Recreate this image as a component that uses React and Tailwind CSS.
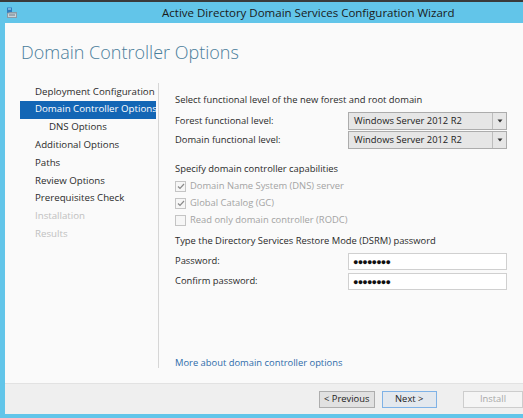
// ----- AD DS Configuration Wizard -----
// Domain Controller Options page

const navItems = [
  { label: "Deployment Configuration" },
  { label: "Domain Controller Options", active: true },
  { label: "DNS Options", indent: true },
  { label: "Additional Options" },
  { label: "Paths" },
  { label: "Review Options" },
  { label: "Prerequisites Check" },
  { label: "Installation", disabled: true },
  { label: "Results", disabled: true },
];

const WizardIcon = () => (
  <svg width="12" height="12" viewBox="0 0 12 12">
    <rect x="1" y="0.5" width="5" height="7" fill="#2f7fc1" />
    <rect x="2" y="1.5" width="3" height="1" fill="#bfe3f7" />
    <path d="M1 6 L4 5 L11 5 L11 11 L1 11 Z" fill="#8a9aa6" />
    <rect x="2" y="6.5" width="8" height="3.5" fill="#c9d3da" />
    <rect x="3" y="7.5" width="6" height="1" fill="#6b7c88" />
  </svg>
);

const Dropdown = ({ value }) => (
  <div className="flex h-[18px] w-[159px] border border-[#acacac] bg-[#e6e6e6]">
    <div className="flex flex-1 items-center pl-[5px] text-[9.4px] text-[#222]">{value}</div>
    <div className="flex w-[14px] items-center justify-center border-l border-[#bdbdbd]">
      <svg width="6" height="4" viewBox="0 0 6 4">
        <path d="M0.5 0.5 L5.5 0.5 L3 3.5 Z" fill="#333" />
      </svg>
    </div>
  </div>
);

const Check = ({ checked, label }) => (
  <div className="flex h-[17px] items-center gap-[4px]">
    <div className="flex h-[11px] w-[11px] items-center justify-center border border-[#c4c4c4] bg-[#f6f6f6]">
      {checked && (
        <svg width="8" height="7" viewBox="0 0 8 7">
          <path d="M1 3.5 L3 5.5 L7 1" fill="none" stroke="#8a8a8a" strokeWidth="1.2" />
        </svg>
      )}
    </div>
    <span className="text-[9.4px] text-[#a3a3a3]">{label}</span>
  </div>
);

const PasswordRow = ({ label }) => (
  <div className="flex items-center">
    <span className="w-[173px] text-[9.4px] text-[#2a2a2a]">{label}</span>
    <div className="flex h-[17px] w-[159px] items-center border border-[#d0d0d0] bg-white pl-[4px] text-[9px] tracking-[-0.8px] text-[#111]">
      ●●●●●●●●
    </div>
  </div>
);

export default function App() {
  return (
    <div
      className="flex h-[418px] w-[523px] flex-col overflow-hidden bg-[#3a3a3a]"
      style={{ fontFamily: '"Open Sans", "Noto Sans", sans-serif' }}
    >
      <div className="h-[2px]" />
      <div className="flex flex-1 flex-col bg-[#62c5e9] pb-[4px] pl-[5px]">
        {/* title bar */}
        <div className="flex h-[21px] items-center">
          <div className="ml-[1px] flex items-center">
            <WizardIcon />
          </div>
          <span className="ml-[144px] text-[11.5px] text-[#1a1a1a]">
            Active Directory Domain Services Configuration Wizard
          </span>
        </div>

        {/* body */}
        <div className="flex flex-1 flex-col bg-[#fafafa]">
          <div className="h-[60px] pl-[16px] pt-[16px]">
            <h1 className="text-[18px] font-light leading-[26px] text-[#4a7d9a]">Domain Controller Options</h1>
          </div>

          <div className="flex h-[300px]">
            <div className="ml-[15px] h-[285px] w-[139px] border-r border-[#d6d6d6] pr-[2px]">
              {navItems.map((item) => (
                <div
                  key={item.label}
                  className={
                    "flex h-[17.8px] items-center whitespace-nowrap text-[9.7px] " +
                    (item.indent ? "pl-[29px] " : "pl-[15px] ") +
                    (item.active
                      ? "bg-[#1366b5] text-white"
                      : item.disabled
                        ? "text-[#c0c0c0]"
                        : "text-[#2a2a2a]")
                  }
                >
                  {item.label}
                </div>
              ))}
            </div>

            <div className="flex flex-1 flex-col pl-[16px] pt-[10px]">
              <div className="text-[9.4px] leading-[14px] text-[#2a2a2a]">
                Select functional level of the new forest and root domain
              </div>
              <div className="mt-[5px] flex flex-col gap-[1px]">
                <div className="flex items-center">
                  <span className="w-[173px] text-[9.4px] text-[#2a2a2a]">Forest functional level:</span>
                  <Dropdown value="Windows Server 2012 R2" />
                </div>
                <div className="flex items-center">
                  <span className="w-[173px] text-[9.4px] text-[#2a2a2a]">Domain functional level:</span>
                  <Dropdown value="Windows Server 2012 R2" />
                </div>
              </div>

              <div className="mt-[13px] text-[9.4px] leading-[14px] text-[#2a2a2a]">
                Specify domain controller capabilities
              </div>
              <div className="mt-[2px] flex flex-col">
                <Check checked label="Domain Name System (DNS) server" />
                <Check checked label="Global Catalog (GC)" />
                <Check label="Read only domain controller (RODC)" />
              </div>

              <div className="mt-[5px] text-[9.4px] leading-[14px] text-[#2a2a2a]">
                Type the Directory Services Restore Mode (DSRM) password
              </div>
              <div className="mt-[5px] flex flex-col gap-[3px]">
                <PasswordRow label="Password:" />
                <PasswordRow label="Confirm password:" />
              </div>

              <div className="mt-auto pb-[13px] text-[9.4px] text-[#2f6caa]">
                More about domain controller options
              </div>
            </div>
          </div>

          {/* footer */}
          <div className="flex flex-1 items-start border-t border-[#e2e2e2] bg-[#efefef] pt-[7px]">
            <div className="ml-[314px] flex h-[17px] w-[60px] items-center justify-center border border-[#adadad] bg-[#e1e1e1] text-[9.4px] text-[#222]">
              &lt; Previous
            </div>
            <div className="ml-[7px] flex h-[17px] w-[60px] items-center justify-center border border-[#7fb2e6] bg-[#e3e8ee] text-[9.4px] text-[#222]">
              Next &gt;
            </div>
            <div className="ml-[26px] flex h-[17px] w-[60px] shrink-0 items-center justify-center border border-[#cdcdcd] bg-[#f5f5f5] text-[9.4px] text-[#a8a8a8]">
              Install
            </div>
          </div>
        </div>
      </div>
    </div>
  );
}
